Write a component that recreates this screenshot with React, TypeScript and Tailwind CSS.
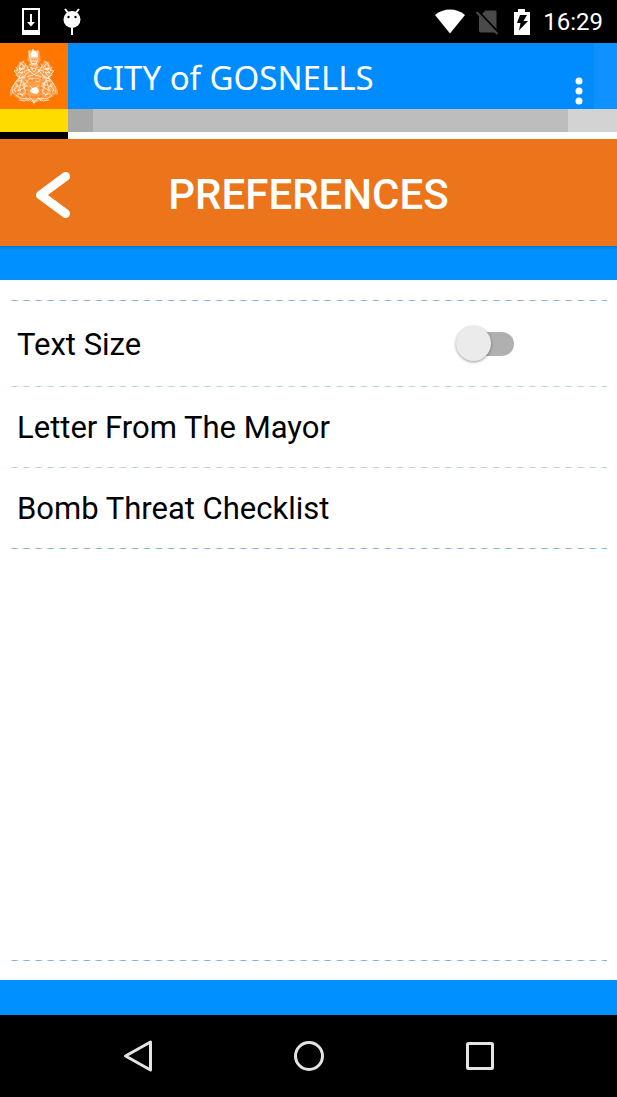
import { useState } from "react";
import type { ReactNode } from "react";

function StatusBar() {
  return (
    <div className="flex h-[43px] items-center justify-between bg-black pl-5 pr-[14px] text-white">
      <div className="flex items-center gap-5">
        <svg width="22" height="30" viewBox="0 0 22 30" aria-hidden="true">
          <path fill="#fff" fillRule="evenodd" d="M2 1h18v27H2zM4 3v20h14V3z" />
          <path d="M11 7v11" stroke="#fff" strokeWidth="2" />
          <path d="M7 15h8l-4 4.500z" fill="#fff" />
        </svg>
        <svg width="20" height="30" viewBox="0 0 20 30" aria-hidden="true">
          <path d="M3 2l4 5M17 2l-4 5M10 21v7" stroke="#fff" strokeWidth="2" />
          <circle cx="10" cy="12.500" r="8.500" fill="#fff" />
          <circle cx="6.500" cy="10" r="1.200" fill="#000" />
          <circle cx="13.500" cy="10" r="1.200" fill="#000" />
        </svg>
      </div>
      <div className="flex items-center">
        <svg width="30" height="26" viewBox="0 0 30 26" className="mr-[11px]" aria-hidden="true">
          <path d="M0 6Q6.500 0.500 15 0.500T30 6L15 24.500z" fill="#fff" />
        </svg>
        <svg width="24" height="26" viewBox="0 0 24 26" className="mr-[13px]" aria-hidden="true">
          <path d="M3 8l6.500-6.500H19q1.500 0 1.500 1.500V21.500q0 2-2 2H5q-2 0-2-2z" fill="#4a4a4a" />
          <path d="M2 2l21 22" stroke="#000" strokeWidth="2" />
          <path d="M0.500 3l21 22" stroke="#4a4a4a" strokeWidth="2" />
        </svg>
        <svg width="18" height="26" viewBox="0 0 18 26" className="mr-[12px]" aria-hidden="true">
          <path d="M5 0h7v3h5v23H1V3h4z" fill="#fff" />
          <path d="M7 6h7l-3.500 6H15L6 21.500l1.500-7.500H4z" fill="#000" />
        </svg>
        <span className="text-[24px] leading-[28px]">16:29</span>
      </div>
    </div>
  );
}

function Crest() {
  return (
    <svg width="48" height="58" viewBox="0 0 48 58" aria-hidden="true">
      <g fill="#fff" fillOpacity="0.3">
        <path d="M19 3h10l2 10-4 6h-6l-4-6z" />
        <path d="M9 15q6-3 8 5 7-5 14 0 2-8 8-5l4 10-3 7H8l-3-7z" />
        <path d="M8 31h32l6 10-3 9-10 3-9 3-9-3-10-3-4-9z" />
      </g>
      <g fill="none" stroke="#fff" strokeOpacity="0.75" strokeWidth="1" strokeLinecap="round" strokeLinejoin="round">
        <path d="M19 4l2 4 2-6 2 6 3-4-1 7h-7zM20 9h7M20 12l2 5h4l2-5M21 14h6M19 18q5-3 9 0" />
        <path d="M17 19l2 5 2-4 3 5 3-5 2 4 3-5M15 24q8-5 18 0M16 27l4-3 4 4 5-4 4 4" />
        <path d="M14 14q-5 3-5 8l4-1-5 5 5-1-4 5M10 16l4 3-5 3 5 1M16 17l-3 6 3 5-4 2" />
        <path d="M34 14q6 3 5 8l-4-1 5 5-5-1 4 5M38 16l-4 3 5 3-5 1M31 17l4 6-3 5 4 2" />
        <path d="M6 20l2 3-4 1 3 3M42 20l-2 3 4 1-3 3M6 28l4 2-2 3M42 28l-4 2 2 3" />
        <path d="M17 30q7-4 14 0l-1 3M17 33v7M19 32h4M26 34h3M20 39l4 4 4-4M20 45l4-3 5 3" />
        <path d="M15 30q-7 0-10 6l3 2-4 5 4 4q5 2 8-2l-2-4 3-4-4-1M8 34q5-2 6 3t-4 6M6 39l4 1-2 4 4-2M12 32l-2 7 5-2M5 36l-3 5 1 6M10 46l4 4" />
        <path d="M33 30q7 0 10 6l-3 2 4 5-4 4q-5 2-8-2l2-4-3-4 4-1M40 34q-5-2-6 3t4 6M42 39l-4 1 2 4-4-2M36 32l2 7-5-2M43 36l3 5-1 6M38 46l-4 4" />
        <path d="M1 43v5M47 43v4M6 48l5 4 7-1M42 48l-5 4-7-1M9 53l6 1 4-3M39 53l-6 1-4-3M18 54l3-3 3 5 4-5 3 3M24 53v4" />
      </g>
      <g fill="none" stroke="#ff7700" strokeOpacity="0.8" strokeWidth="1.500" strokeDasharray="2 2">
        <path d="M11 19l4 8M37 19l-4 8M19 21q5 3 10 0M16 31l6 3M32 31l-6 3M8 36q6 3 3 10M40 36q-6 3-3 10M17 36v14M31 36v14M13 50h22M6 45l6 6M42 45l-6 6M24 28v8" />
      </g>
      <path d="M22 41l4-1 3 3-2 4-5-1-2-2zM22 4h4l2 6h-7z" fill="#fff" />
    </svg>
  );
}

function Banner() {
  return (
    <header>
      <div className="flex h-[66px] bg-[#008cff]">
        <div className="flex w-[68px] items-center justify-center bg-[#ff7700]">
          <Crest />
        </div>
        <div className="flex flex-1 items-center pl-6 pt-[3px]">
          <h1 className="font-['Noto_Sans',sans-serif] text-[33px] leading-[44px] text-white">
            CITY of GOSNELLS
          </h1>
        </div>
        <button type="button" aria-label="More options" className="flex w-[20px] items-end pb-[3px]">
          <svg width="10" height="30" viewBox="0 0 10 30" aria-hidden="true">
            <g fill="#fff">
              <circle cx="5" cy="5" r="3.500" />
              <circle cx="5" cy="15" r="3.500" />
              <circle cx="5" cy="25" r="3.500" />
            </g>
          </svg>
        </button>
        <div className="w-[23px] bg-[#0f92ff]" />
      </div>
      <div className="flex h-[23px]">
        <div className="w-[68px] bg-[#ffdc00]" />
        <div className="w-[25px] bg-[#a8a8a8]" />
        <div className="flex-1 bg-[#bdbdbd]" />
        <div className="w-[49px] bg-[#d3d3d3]" />
      </div>
      <div className="h-[7px] bg-white">
        <div className="h-full w-[68px] bg-black" />
      </div>
    </header>
  );
}

function TitleBar() {
  return (
    <div className="grid h-[107px] grid-cols-[1fr_auto_1fr] items-center bg-[#ec751b] pt-[4px]">
      <button type="button" aria-label="Back" className="w-[71px] pl-[35px]">
        <svg width="36" height="48" viewBox="0 0 36 48" aria-hidden="true">
          <path d="M30.500 5.500L5.500 24l25 18.500" fill="none" stroke="#fff" strokeWidth="9" strokeLinecap="round" strokeLinejoin="round" />
        </svg>
      </button>
      <h2 className="text-[42px] font-medium leading-[50px] text-white">PREFERENCES</h2>
    </div>
  );
}

function Divider({ faint = false }: { faint?: boolean }) {
  return (
    <div
      className={
        faint
          ? "h-px bg-[linear-gradient(90deg,transparent,#b5cfe8_25%,#b5cfe8_50%,transparent_75%)] bg-[length:calc(200%/99)_100%]"
          : "h-px bg-[linear-gradient(90deg,transparent,#7fb0df_25%,#7fb0df_50%,transparent_75%)] bg-[length:calc(200%/99)_100%]"
      }
    />
  );
}

function LinkRow({ children }: { children: ReactNode }) {
  return (
    <a href="#" className="flex h-[80px] items-center pl-[7px] pt-[2px]">
      {children}
    </a>
  );
}

function TextSizeRow() {
  const [large, setLarge] = useState(false);
  return (
    <label className="flex h-[85px] items-center justify-between pl-[7px] pr-[93px]">
      <span className="pt-[2px]">Text Size</span>
      <span className="flex h-6 w-[58px] items-center rounded-full bg-[linear-gradient(90deg,transparent_20px,#b0b0b0_20px)] has-checked:justify-end">
        <input
          type="checkbox"
          role="switch"
          checked={large}
          onChange={(e) => setLarge(e.target.checked)}
          className="size-[35px] appearance-none rounded-full bg-[#ebebeb] shadow-[0_1px_3px_rgba(0,0,0,0.4)]"
        />
      </span>
    </label>
  );
}

function NavBar() {
  return (
    <nav className="flex h-[82px] items-center justify-center gap-[123px] bg-black">
      <button type="button" aria-label="Back" className="flex w-12 justify-center">
        <svg width="32" height="34" viewBox="0 0 32 34" aria-hidden="true">
          <path d="M28.500 3v28L3.500 17z" fill="none" stroke="#e4e4e4" strokeWidth="3" strokeLinejoin="round" />
        </svg>
      </button>
      <button type="button" aria-label="Home" className="flex w-12 justify-center">
        <svg width="32" height="32" viewBox="0 0 32 32" aria-hidden="true">
          <circle cx="16" cy="16" r="13.500" fill="none" stroke="#e4e4e4" strokeWidth="3" />
        </svg>
      </button>
      <button type="button" aria-label="Overview" className="flex w-12 justify-center">
        <svg width="30" height="30" viewBox="0 0 30 30" aria-hidden="true">
          <rect x="2.500" y="2.500" width="25" height="25" rx="1" fill="none" stroke="#e4e4e4" strokeWidth="3" />
        </svg>
      </button>
    </nav>
  );
}

export default function App() {
  return (
    <div className="flex min-h-screen flex-col bg-white font-[Roboto,sans-serif]">
      <StatusBar />
      <Banner />
      <TitleBar />
      <div className="h-[34px] bg-[linear-gradient(#007ad9,#0090ff_4px)]" />
      <main className="flex flex-1 flex-col px-[10px] pb-[19px] pt-5 text-[31px] leading-[38px] text-black">
        <Divider />
        <TextSizeRow />
        <Divider faint />
        <LinkRow>Letter From The Mayor</LinkRow>
        <Divider faint />
        <LinkRow>Bomb Threat Checklist</LinkRow>
        <Divider />
        <div className="flex-1" />
        <Divider />
      </main>
      <div className="h-[35px] bg-[#0090ff]" />
      <NavBar />
    </div>
  );
}
